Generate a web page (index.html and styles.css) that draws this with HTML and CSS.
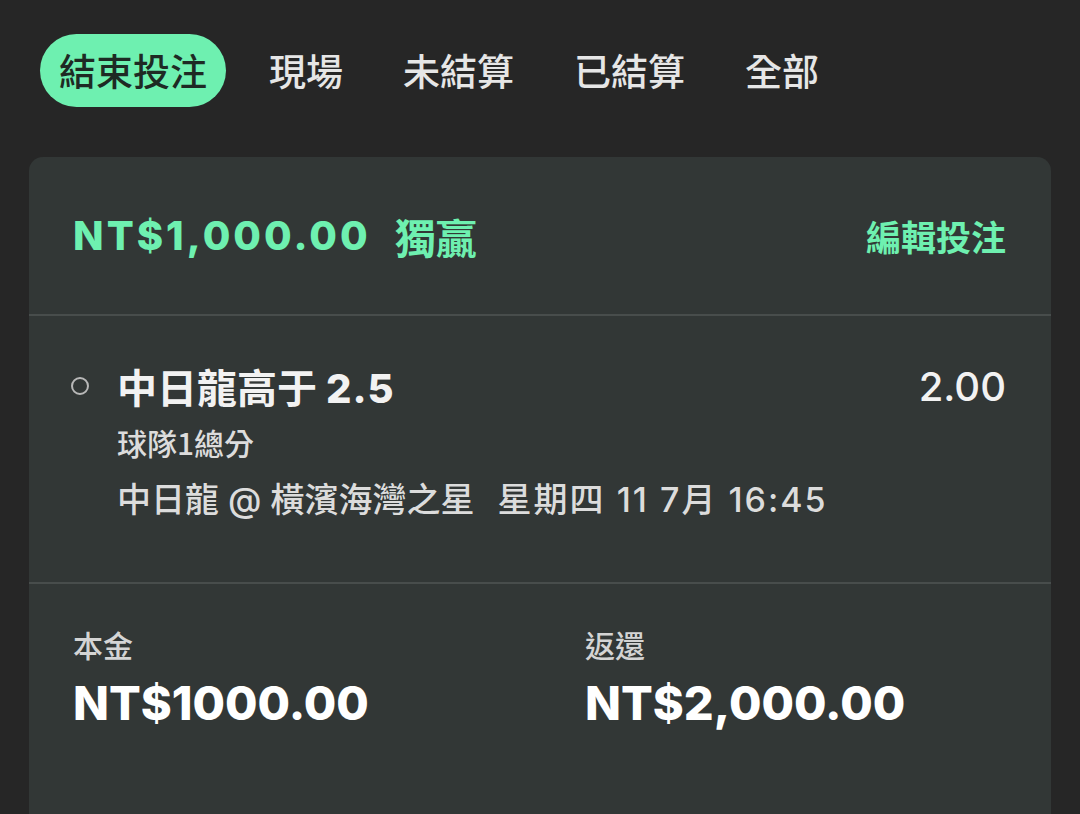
FILE: index.html
```html
<!DOCTYPE html>
<html>

<head>
    <title>我的投注</title>
    <link rel="stylesheet" href="styles.css">
</head>

<body>
    <nav class="tabs">
        <span class="tab active">結束投注</span>
        <span class="tab">現場</span>
        <span class="tab">未結算</span>
        <span class="tab">已結算</span>
        <span class="tab">全部</span>
    </nav>

    <div class="card">
        <div class="card-head">
            <div class="stake-title">
                <span class="amount">NT$1,000.00</span>
                <span class="type">獨贏</span>
            </div>
            <span class="edit">編輯投注</span>
        </div>

        <div class="selection">
            <div class="sel-row">
                <span class="dot"></span>
                <span class="sel-name">中日龍高于 <b>2.5</b></span>
                <span class="odds">2.00</span>
            </div>
            <div class="market">球隊1總分</div>
            <div class="event">中日龍 @ 橫濱海灣之星 <span class="when">星期四 11 7月 16:45</span></div>
        </div>

        <div class="totals">
            <div class="total">
                <div class="label">本金</div>
                <div class="value">NT$1000.00</div>
            </div>
            <div class="total">
                <div class="label">返還</div>
                <div class="value">NT$2,000.00</div>
            </div>
        </div>
    </div>
</body>

</html>
```

FILE: styles.css
```css
body {
    margin: 0;
    background-color: #262626;
    font-family: Inter, "Noto Sans CJK TC", sans-serif;
    color: #f2f2f2;
    height: 814px;
    overflow: hidden;
}

.tabs {
    display: flex;
    align-items: center;
    padding: 34px 0 0 40px;
}

.tab {
    font-family: "Noto Sans CJK TC", sans-serif;
    font-size: 37px;
    font-weight: 500;
    color: #e6e6e6;
    padding: 0 27px;
    height: 73px;
    line-height: 73px;
    margin-right: 6px;
}

.tab.active {
    background-color: #6ef0b0;
    color: #1e2a24;
    border-radius: 37px;
    padding: 0 19px;
    margin-right: 16px;
}

.card {
    margin: 50px 29px 0 29px;
    background-color: #323736;
    border-radius: 14px;
}

.card-head {
    height: 157px;
    display: flex;
    align-items: center;
    justify-content: space-between;
    padding: 0 45px 0 44px;
    border-bottom: 2px solid #484d4c;
}

.stake-title {
    display: flex;
    align-items: center;
    gap: 24px;
    color: #6ef0b0;
}

.amount {
    font-size: 40px;
    font-weight: 800;
    letter-spacing: 3px;
}

.type {
    font-family: "Noto Sans CJK TC", sans-serif;
    font-size: 41px;
    font-weight: 700;
}

.edit {
    font-family: "Noto Sans CJK TC", sans-serif;
    font-size: 35px;
    font-weight: 700;
    color: #6ef0b0;
}

.selection {
    height: 268px;
    padding: 44px 45px 0 42px;
    box-sizing: border-box;
    border-bottom: 2px solid #484d4c;
}

.sel-row {
    display: flex;
    align-items: center;
    height: 52px;
}

.dot {
    width: 14px;
    height: 14px;
    border: 2.5px solid #b8b8b8;
    border-radius: 50%;
    margin-right: 28px;
}

.sel-name {
    font-family: "Noto Sans CJK TC", sans-serif;
    font-size: 40px;
    font-weight: 700;
    flex: 1;
}

.sel-name b {
    font-family: Inter, sans-serif;
    font-weight: 800;
    letter-spacing: 1px;
}

.odds {
    font-size: 40px;
    font-weight: 500;
}

.market {
    font-family: "Noto Sans CJK TC", sans-serif;
    font-size: 30px;
    font-weight: 500;
    color: #dcdcdc;
    padding-left: 46px;
    margin-top: 8px;
}

.event {
    font-size: 34px;
    font-weight: 500;
    color: #dcdcdc;
    padding-left: 46px;
    margin-top: 9px;
}

.when {
    margin-left: 14px;
    letter-spacing: 2px;
}

.totals {
    display: flex;
    padding: 38px 44px 140px 44px;
}

.total {
    flex: 0 0 512px;
}

.label {
    font-family: "Noto Sans CJK TC", sans-serif;
    font-size: 30px;
    font-weight: 500;
    color: #d4d4d4;
}

.value {
    font-size: 47px;
    font-weight: 800;
    color: #ffffff;
    margin-top: 8px;
}
```
